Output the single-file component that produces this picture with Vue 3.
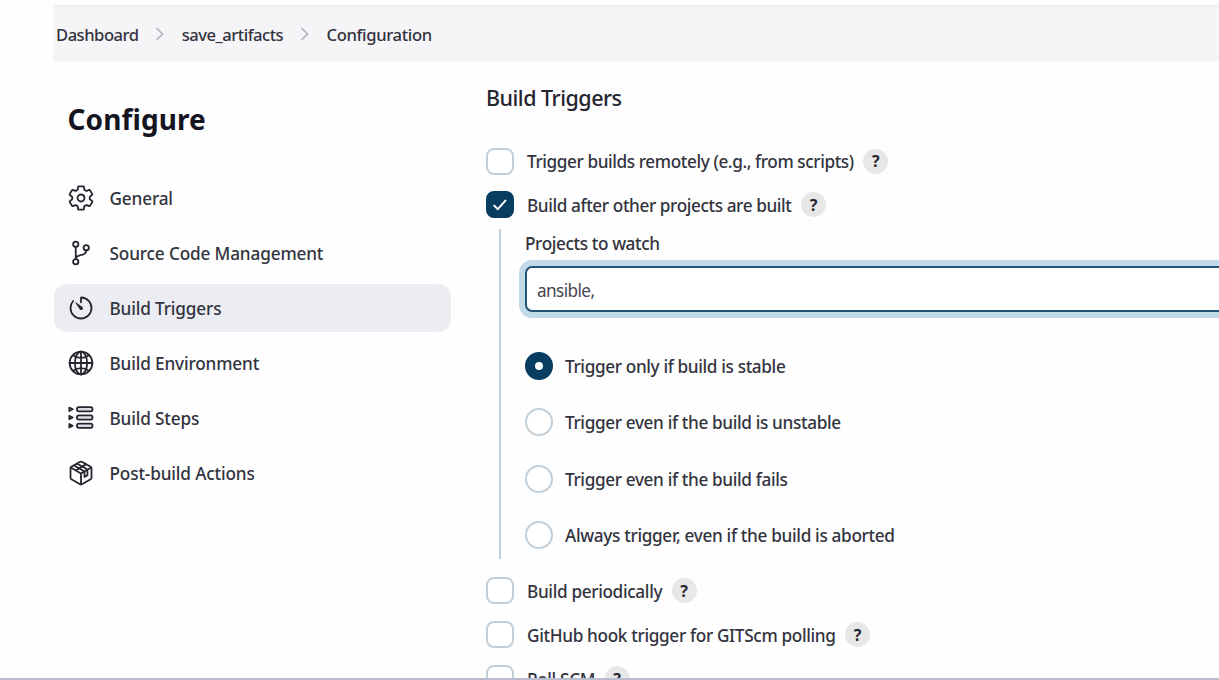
<script setup>
const crumbs = ['Dashboard', 'save_artifacts', 'Configuration']
const nav = [
  { text: 'General', icon: 'gear' },
  { text: 'Source Code Management', icon: 'branch' },
  { text: 'Build Triggers', icon: 'timer', active: true },
  { text: 'Build Environment', icon: 'globe' },
  { text: 'Build Steps', icon: 'steps' },
  { text: 'Post-build Actions', icon: 'box' },
]
const radios = [
  'Trigger only if build is stable',
  'Trigger even if the build is unstable',
  'Trigger even if the build fails',
  'Always trigger, even if the build is aborted',
]
const before = [
  { text: 'Trigger builds remotely (e.g., from scripts)' },
  { text: 'Build after other projects are built', checked: true },
]
const after = [
  { text: 'Build periodically' },
  { text: 'GitHub hook trigger for GITScm polling' },
  { text: 'Poll SCM' },
]
</script>

<template>
  <div class="page">
    <header class="crumbs">
      <template v-for="(c, i) in crumbs" :key="c">
        <svg v-if="i" class="chev" viewBox="0 0 10 14"><path d="M1.5 1.2 7.6 7l-6.1 5.8" /></svg>
        <span>{{ c }}</span>
      </template>
    </header>
    <div class="body">
      <aside>
        <h1>Configure</h1>
        <nav>
          <a v-for="n in nav" :key="n.text" :class="{ active: n.active }">
            <svg class="icon" viewBox="0 0 512 512">
              <template v-if="n.icon === 'gear'">
                <path d="M262.29 192.31a64 64 0 1 0 57.4 57.4 64.13 64.13 0 0 0-57.4-57.4zM416.39 256a154.34 154.34 0 0 1-1.53 20.79l45.21 35.46a10.81 10.81 0 0 1 2.45 13.75l-42.77 74a10.81 10.81 0 0 1-13.14 4.59l-44.9-18.08a16.11 16.11 0 0 0-15.17 1.75A164.48 164.48 0 0 1 325 400.8a15.94 15.94 0 0 0-8.82 12.14l-6.73 47.89a11.08 11.08 0 0 1-10.68 9.17h-85.54a11.11 11.11 0 0 1-10.69-8.87l-6.72-47.82a16.07 16.07 0 0 0-9-12.22 155.3 155.3 0 0 1-21.46-12.57 16 16 0 0 0-15.11-1.71l-44.89 18.07a10.81 10.81 0 0 1-13.14-4.58l-42.77-74a10.8 10.8 0 0 1 2.45-13.75l38.21-30a16.05 16.05 0 0 0 6-14.08c-.36-4.17-.58-8.33-.58-12.5s.21-8.27.58-12.35a16 16 0 0 0-6.07-13.94l-38.19-30A10.81 10.81 0 0 1 49.48 186l42.77-74a10.81 10.81 0 0 1 13.14-4.59l44.9 18.08a16.11 16.11 0 0 0 15.17-1.75A164.48 164.48 0 0 1 187 111.2a15.94 15.94 0 0 0 8.82-12.14l6.73-47.89A11.08 11.08 0 0 1 213.23 42h85.54a11.11 11.11 0 0 1 10.69 8.87l6.72 47.82a16.07 16.07 0 0 0 9 12.22 155.3 155.3 0 0 1 21.46 12.57 16 16 0 0 0 15.11 1.71l44.89-18.07a10.81 10.81 0 0 1 13.14 4.58l42.77 74a10.8 10.8 0 0 1-2.45 13.75l-38.21 30a16.05 16.05 0 0 0-6.05 14.08c.33 4.14.55 8.3.55 12.47z" />
              </template>
              <template v-else-if="n.icon === 'branch'">
                <circle cx="160" cy="96" r="48" /><circle cx="160" cy="416" r="48" /><circle cx="352" cy="160" r="48" />
                <path d="M160 368V144M352 208c0 128-192 48-192 160" />
              </template>
              <template v-else-if="n.icon === 'timer'">
                <path d="M112.91 128A191.85 191.85 0 0 0 64 254c-1.18 106.35 85.65 193.8 192 194 106.2.2 192-85.83 192-192 0-104.54-83.55-189.61-187.5-192a4.36 4.36 0 0 0-4.5 4.37V152" />
                <path class="fill" d="m233.38 278.63-79-113a8.13 8.13 0 0 1 11.32-11.32l113 79a32.5 32.5 0 0 1-37.25 53.26 33.21 33.21 0 0 1-8.07-7.94z" />
              </template>
              <template v-else-if="n.icon === 'globe'">
                <path d="M256 48C141.13 48 48 141.13 48 256s93.13 208 208 208 208-93.13 208-208S370.87 48 256 48z" />
                <path d="M256 48c-58.07 0-112.67 93.13-112.67 208S197.93 464 256 464s112.67-93.13 112.67-208S314.07 48 256 48z" />
                <path d="M117.33 117.33c38.24 27.15 86.38 43.34 138.67 43.34s100.43-16.19 138.67-43.34M394.67 394.67c-38.24-27.15-86.38-43.34-138.67-43.34s-100.43 16.19-138.67 43.34M256 48v416M464 256H48" />
              </template>
              <template v-else-if="n.icon === 'steps'">
                <rect class="bar" x="182" y="58" width="284" height="78" rx="34" /><rect class="bar" x="182" y="208" width="284" height="78" rx="34" /><rect class="bar" x="182" y="358" width="284" height="78" rx="34" />
                <path d="M42 66v62l62-31zM42 216v62l62-31zM42 366v62l62-31z" />
              </template>
              <template v-else>
                <path d="M448 341.37V170.61A32 32 0 0 0 432.11 143l-152-88.46a47.94 47.94 0 0 0-48.24 0L79.89 143A32 32 0 0 0 64 170.61v170.76A32 32 0 0 0 79.89 369l152 88.46a48 48 0 0 0 48.24 0l152-88.46A32 32 0 0 0 448 341.37z" />
                <path d="m69 153.99 187 110 187-110M256 463.99v-200M132 120l188 108v100l54-32V192L190 86M166 206 346 98" />
              </template>
            </svg>
            <span>{{ n.text }}</span>
          </a>
        </nav>
      </aside>
      <main>
        <h2>Build Triggers</h2>
        <div v-for="o in before" :key="o.text" class="opt">
          <i class="check" :class="{ on: o.checked }">
            <svg v-if="o.checked" viewBox="0 0 14 12"><path d="M1.2 6.6 4.8 10.2 12.4 1.6" /></svg>
          </i>
          <span>{{ o.text }}</span><b class="help">?</b>
        </div>
        <section>
          <label>Projects to watch</label>
          <div class="field"><span>ansible,</span></div>
          <div v-for="(r, i) in radios" :key="r" class="radio">
            <i :class="{ on: i === 0 }"></i><span>{{ r }}</span>
          </div>
        </section>
        <div v-for="o in after" :key="o.text" class="opt late">
          <i class="check"></i><span>{{ o.text }}</span><b class="help">?</b>
        </div>
      </main>
    </div>
    <div class="edge"></div>
  </div>
</template>

<style>
body { background: #fefefe; }
</style>

<style scoped>
.page { position: relative; box-sizing: border-box; width: 1219px; height: 680px; overflow: hidden; padding-top: 5px; font-family: "Noto Sans", "Open Sans", sans-serif; font-size: 17.2px; font-weight: 500; line-height: 24px; letter-spacing: -0.36px; color: #333340; white-space: nowrap; }
.crumbs { display: flex; align-items: center; box-sizing: border-box; height: 57px; margin-left: 53px; padding: 0 0 1px 3px; border-top: 2px solid #ececef; background: #f5f5f8; font-size: 16.6px; letter-spacing: -0.5px; }
.crumbs span:last-child { letter-spacing: -0.34px; }
.crumbs span, nav span, .opt span, .radio span { padding-top: 2px; }
.field span { padding-top: 3px; }
.chev { width: 10px; height: 14px; margin: 0 16.3px 0 17px; fill: none; stroke: #b3b3c4; stroke-width: 1.6; }
.body { display: flex; }
aside { width: 397px; margin-left: 54px; letter-spacing: -0.15px; }
h1 { margin: 37px 0 43px 13.5px; font-size: 28px; line-height: 40px; font-weight: 700; letter-spacing: 0.1px; color: #15151f; }
nav { display: flex; flex-direction: column; gap: 7px; margin-top: -8px; }
nav a { display: flex; align-items: center; height: 48px; padding-left: 13px; border-radius: 13px; }
nav a.active { background: #ecedf3; }
.icon { width: 28px; height: 28px; margin-right: 14.5px; fill: none; stroke: #252530; stroke-width: 33; stroke-linecap: round; stroke-linejoin: round; }
.icon .fill { fill: #252530; stroke: none; }
.icon .bar { fill: #dcdce2; }
main { flex: 1; min-width: 0; margin-left: 35px; }
h2 { margin: 20px 0 33px; font-size: 21.5px; line-height: 32px; font-weight: 500; letter-spacing: -0.5px; color: #252530; }
.opt { display: flex; align-items: center; height: 28px; margin-bottom: 15.6px; letter-spacing: -0.4px; }
.opt.late { margin-bottom: 16px; letter-spacing: -0.34px; }
.check { box-sizing: border-box; flex: none; width: 28px; height: 27px; margin-right: 13px; border: 2px solid #c3cfd8; border-radius: 8px; background: #fff; }
.check.on { display: flex; align-items: center; justify-content: center; border-color: #063d61; background: #063d61; }
.check svg { width: 14px; height: 12px; fill: none; stroke: #fff; stroke-width: 2; stroke-linecap: round; stroke-linejoin: round; }
.help { display: grid; place-items: center; width: 25px; height: 25px; margin-left: 9.5px; border-radius: 50%; background: #e7e7e8; font-size: 16px; font-weight: 700; letter-spacing: 0; color: #252530; }
section { box-sizing: border-box; height: 330px; margin: -5.2px 0 17.9px 13px; padding-left: 24px; border-left: 2px solid #c3cfd8; }
label { display: block; padding-top: 2.5px; height: 34.5px; letter-spacing: -0.39px; }
.field { box-sizing: border-box; display: flex; align-items: center; height: 46px; margin-bottom: 39.5px; padding-left: 10px; border: 2px solid #205578; border-right: 0; border-radius: 7px 0 0 7px; background: #fff; box-shadow: 0 0 0 6px #c2d9e8; font-weight: 400; letter-spacing: -0.6px; color: #45454f; }
.radio { display: flex; align-items: center; height: 28px; margin-bottom: 28.6px; }
.radio:last-child { letter-spacing: -0.33px; }
.radio i { box-sizing: border-box; width: 28px; height: 28px; margin-right: 12px; border: 2px solid #c3cfd8; border-radius: 50%; background: #fff; }
.radio i.on { border: 10px solid #063d61; }
.edge { position: absolute; left: 0; right: 0; bottom: 0; height: 2px; background: #b9bdd0; }
</style>
